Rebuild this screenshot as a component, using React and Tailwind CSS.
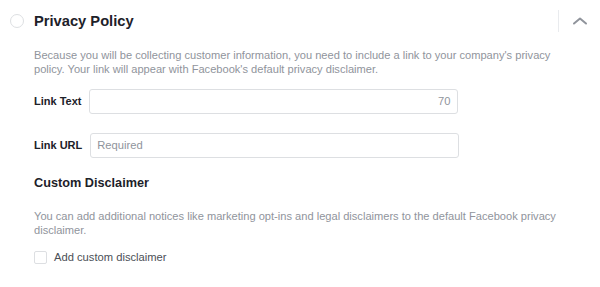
export default function App() {
  return (
    <div className="w-[600px] h-[287px] bg-white font-['Liberation_Sans',Arial,sans-serif] text-[#1d2129]">
      <div className="flex items-center pt-[10px] h-[32px]">
        <span className="ml-[10px] w-[14px] h-[14px] rounded-full border border-[#dddfe2]"></span>
        <h2 className="ml-[10px] text-[14.7px] font-bold leading-[22px]">Privacy Policy</h2>
        <div className="ml-auto flex items-center">
          <span className="w-px h-[22px] bg-[#e9ebee]"></span>
          <svg className="ml-[13px] mr-[12px]" width="16" height="10" viewBox="0 0 16 10" fill="none">
            <path d="M2 7.5 L8 2.5 L14 7.5" stroke="#90949c" strokeWidth="2" strokeLinecap="round" strokeLinejoin="round" />
          </svg>
        </div>
      </div>

      <div className="pl-[34px]">
        <p className="mt-[16px] text-[11.1px] leading-[14px] text-[#90949c] w-[530px]">
          Because you will be collecting customer information, you need to include a link to your company's privacy policy. Your link will appear with Facebook's default privacy disclaimer.
        </p>

        <div className="mt-[13px] flex items-center gap-2">
          <label className="text-[11px] font-bold">Link Text</label>
          <div className="w-[369px] h-[25px] border border-[#dddfe2] rounded-[3px] flex items-center justify-end pr-[7px]">
            <span className="text-[11.2px] text-[#90949c]">70</span>
          </div>
        </div>

        <div className="mt-[19px] flex items-center gap-2">
          <label className="text-[11px] font-bold">Link URL</label>
          <div className="w-[369px] h-[25px] border border-[#dddfe2] rounded-[3px] flex items-center pl-[6px]">
            <span className="text-[11.2px] text-[#90949c]">Required</span>
          </div>
        </div>

        <h3 className="mt-[16px] text-[12.7px] font-bold leading-[18px]">Custom Disclaimer</h3>

        <p className="mt-[17px] text-[11.1px] leading-[14px] text-[#90949c] w-[530px]">
          You can add additional notices like marketing opt-ins and legal disclaimers to the default Facebook privacy disclaimer.
        </p>

        <label className="mt-[12px] flex items-center">
          <span className="w-[13px] h-[13px] border border-[#dddfe2] rounded-[2px]"></span>
          <span className="ml-[7px] text-[11.2px] text-[#4b4f56]">Add custom disclaimer</span>
        </label>
      </div>
    </div>
  );
}
